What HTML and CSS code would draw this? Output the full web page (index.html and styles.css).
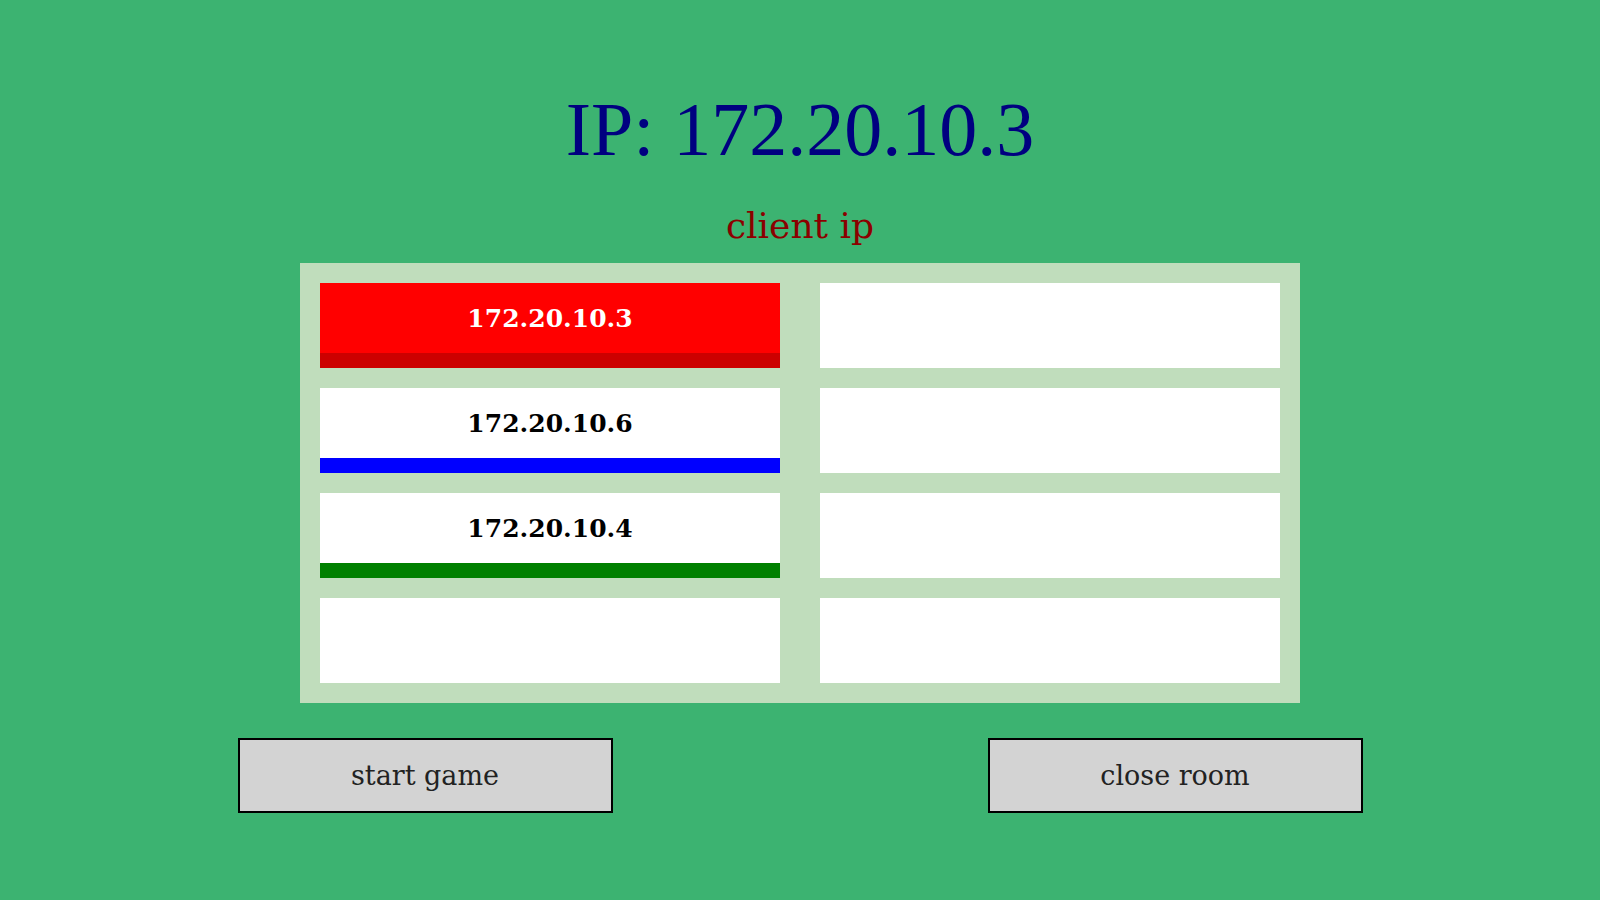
FILE: index.html
```html
<!DOCTYPE html>
<html>
<head>
<meta charset="utf-8">
<link rel="stylesheet" href="styles.css">
</head>
<body>
<main class="room">
  <h1 class="host-ip">IP: 172.20.10.3</h1>
  <h2 class="client-label">client ip</h2>
  <section class="client-grid">
    <div class="slot slot-red">172.20.10.3</div>
    <div class="slot"></div>
    <div class="slot slot-blue">172.20.10.6</div>
    <div class="slot"></div>
    <div class="slot slot-green">172.20.10.4</div>
    <div class="slot"></div>
    <div class="slot"></div>
    <div class="slot"></div>
  </section>
  <div class="actions">
    <button class="action">start game</button>
    <button class="action">close room</button>
  </div>
</main>
</body>
</html>
```
FILE: styles.css
```css
html, body {
  margin: 0;
  padding: 0;
  background: #3cb371;
  width: 1600px;
  height: 900px;
  overflow: hidden;
}

.room {
  display: flex;
  flex-direction: column;
  align-items: center;
}

.host-ip {
  margin: 89px 0 0;
  font-family: "Liberation Serif", serif;
  font-weight: normal;
  font-size: 76px;
  line-height: 80px;
  letter-spacing: 0;
  color: #000080;
}

.client-label {
  margin: 37px 0 0;
  font-family: "DejaVu Serif", serif;
  font-weight: normal;
  font-size: 36px;
  line-height: 40px;
  color: #8b0000;
}

.client-grid {
  margin-top: 17px;
  width: 1000px;
  box-sizing: border-box;
  padding: 20px;
  background: #c0ddbc;
  display: grid;
  grid-template-columns: 460px 460px;
  column-gap: 40px;
  row-gap: 20px;
}

.slot {
  box-sizing: border-box;
  height: 85px;
  background: #ffffff;
  border-bottom: 15px solid #ffffff;
  display: flex;
  align-items: center;
  justify-content: center;
  font-family: "DejaVu Serif", serif;
  font-weight: bold;
  font-size: 25px;
  color: #000000;
}

.slot-red {
  background: #ff0000;
  border-bottom-color: #cc0000;
  color: #ffffff;
}

.slot-blue {
  border-bottom-color: #0000ff;
}

.slot-green {
  border-bottom-color: #008000;
}

.actions {
  margin-top: 35px;
  display: flex;
  gap: 375px;
}

.action {
  box-sizing: border-box;
  width: 375px;
  height: 75px;
  background: #d3d3d3;
  border: 2px solid #000000;
  border-radius: 0;
  font-family: "DejaVu Serif", serif;
  font-size: 27px;
  color: #222222;
  padding: 0;
}
```
